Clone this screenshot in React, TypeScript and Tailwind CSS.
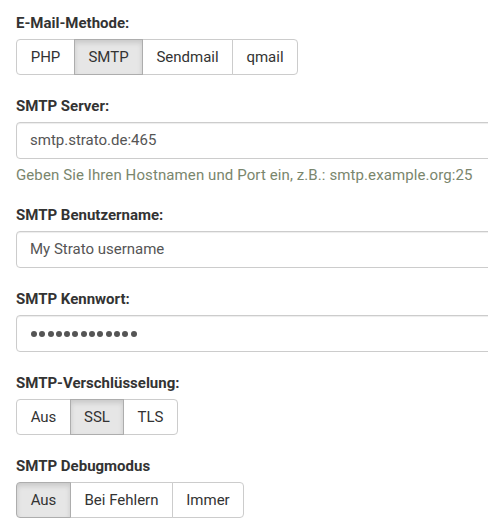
import React from "react";

const font = { fontFamily: "Roboto, 'Liberation Sans', sans-serif" };

function Group({ items, active }: { items: { label: string; w: number }[]; active: number }) {
  return (
    <div className="flex h-[36px]">
      {items.map((it, i) => {
        const isActive = i === active;
        const first = i === 0;
        const last = i === items.length - 1;
        return (
          <div
            key={it.label}
            style={{ width: it.w }}
            className={
              "flex items-center justify-center text-[15px] text-[#333] border " +
              (first ? "rounded-l-[4px] " : "-ml-px ") +
              (last ? "rounded-r-[4px] " : "") +
              (isActive
                ? "bg-[#e6e6e6] border-[#adadad] shadow-[inset_0_3px_5px_rgba(0,0,0,0.125)] z-10 relative"
                : "bg-white border-[#ccc]")
            }
          >
            {it.label}
          </div>
        );
      })}
    </div>
  );
}

function Label({ children }: { children: React.ReactNode }) {
  return <div className="text-[15px] font-bold text-[#333] leading-[21px] mb-[5px]">{children}</div>;
}

function Input({ value, password }: { value: string; password?: boolean }) {
  return (
    <div className="h-[37px] w-[520px] border border-[#ccc] rounded-[4px] bg-white shadow-[inset_0_1px_1px_rgba(0,0,0,0.075)] flex items-center px-[13px] text-[15px] text-[#555]">
      {password ? (
        <div className="flex gap-[2.3px] pl-px">
          {Array.from({ length: 13 }).map((_, i) => (
            <span key={i} className="block w-[6px] h-[6px] rounded-full bg-[#555]" />
          ))}
        </div>
      ) : (
        value
      )}
    </div>
  );
}

export default function App() {
  return (
    <div className="w-[488px] h-[530px] overflow-hidden bg-white pl-[16px] pt-[13px]" style={font}>
      <div className="mb-[21px]">
        <Label>E-Mail-Methode:</Label>
        <Group
          active={1}
          items={[
            { label: "PHP", w: 59 },
            { label: "SMTP", w: 69 },
            { label: "Sendmail", w: 91 },
            { label: "qmail", w: 66 },
          ]}
        />
      </div>
      <div className="mb-[19px]">
        <Label>SMTP Server:</Label>
        <Input value="smtp.strato.de:465" />
        <div className="text-[15px] text-[#7a866d] mt-[6px] leading-[21px] tracking-[0.1px]">
          Geben Sie Ihren Hostnamen und Port ein, z.B.: smtp.example.org:25
        </div>
      </div>
      <div className="mb-[21px]">
        <Label>SMTP Benutzername:</Label>
        <Input value="My Strato username" />
      </div>
      <div className="mb-[21px]">
        <Label>SMTP Kennwort:</Label>
        <Input value="" password />
      </div>
      <div className="mb-[21px]">
        <Label>SMTP-Verschlüsselung:</Label>
        <Group
          active={1}
          items={[
            { label: "Aus", w: 55 },
            { label: "SSL", w: 54 },
            { label: "TLS", w: 55 },
          ]}
        />
      </div>
      <div>
        <Label>SMTP Debugmodus</Label>
        <Group
          active={0}
          items={[
            { label: "Aus", w: 55 },
            { label: "Bei Fehlern", w: 103 },
            { label: "Immer", w: 72 },
          ]}
        />
      </div>
    </div>
  );
}
